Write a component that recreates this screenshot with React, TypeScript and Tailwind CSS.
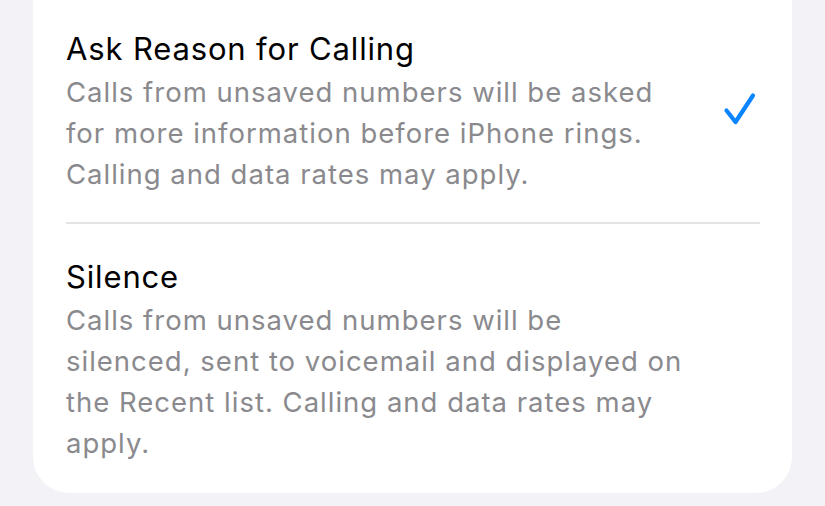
import React from 'react'

type Option = {
  id: string
  title: string
  lines: string[]
  selected: boolean
}

const OPTIONS: Option[] = [
  {
    id: 'ask',
    title: 'Ask Reason for Calling',
    lines: [
      'Calls from unsaved numbers will be asked',
      'for more information before iPhone rings.',
      'Calling and data rates may apply.',
    ],
    selected: true,
  },
  {
    id: 'silence',
    title: 'Silence',
    lines: [
      'Calls from unsaved numbers will be',
      'silenced, sent to voicemail and displayed on',
      'the Recent list. Calling and data rates may',
      'apply.',
    ],
    selected: false,
  },
]

function Check() {
  return (
    <svg width="34" height="34" viewBox="0 0 34 34" fill="none" className="shrink-0">
      <path d="M4.5 18.5 L13.5 30 L31 3.5" stroke="#0a84ff" strokeWidth="4.2" strokeLinecap="round" strokeLinejoin="round" />
    </svg>
  )
}

export default function App() {
  return (
    <div className="w-[825px] h-[506px] bg-[#f2f2f7] overflow-hidden font-['Inter',sans-serif]">
      <div className="ml-[33px] w-[759px] bg-white rounded-b-[36px] pl-[33px] pr-[32px] pt-[28px] pb-[29px]">
        {OPTIONS.map((o, i) => (
          <div key={o.id}>
            {i > 0 && <div className="h-[2px] bg-[#e4e4e6] mt-[27px] mb-[32px]" />}
            <div className="flex items-start justify-between">
              <div className="leading-[41px]">
                <p className="text-[31px] text-black tracking-[0.85px]">{o.title}</p>
                <p className="mt-[3px] text-[27.5px] text-[#8a8a8e] tracking-[1px]">
                  {o.lines.map((l, j) => (
                    <span key={j} className="block whitespace-nowrap">{l}</span>
                  ))}
                </p>
              </div>
              {o.selected && <div className="mr-[4px] mt-[64px]"><Check /></div>}
            </div>
          </div>
        ))}
      </div>
    </div>
  )
}
